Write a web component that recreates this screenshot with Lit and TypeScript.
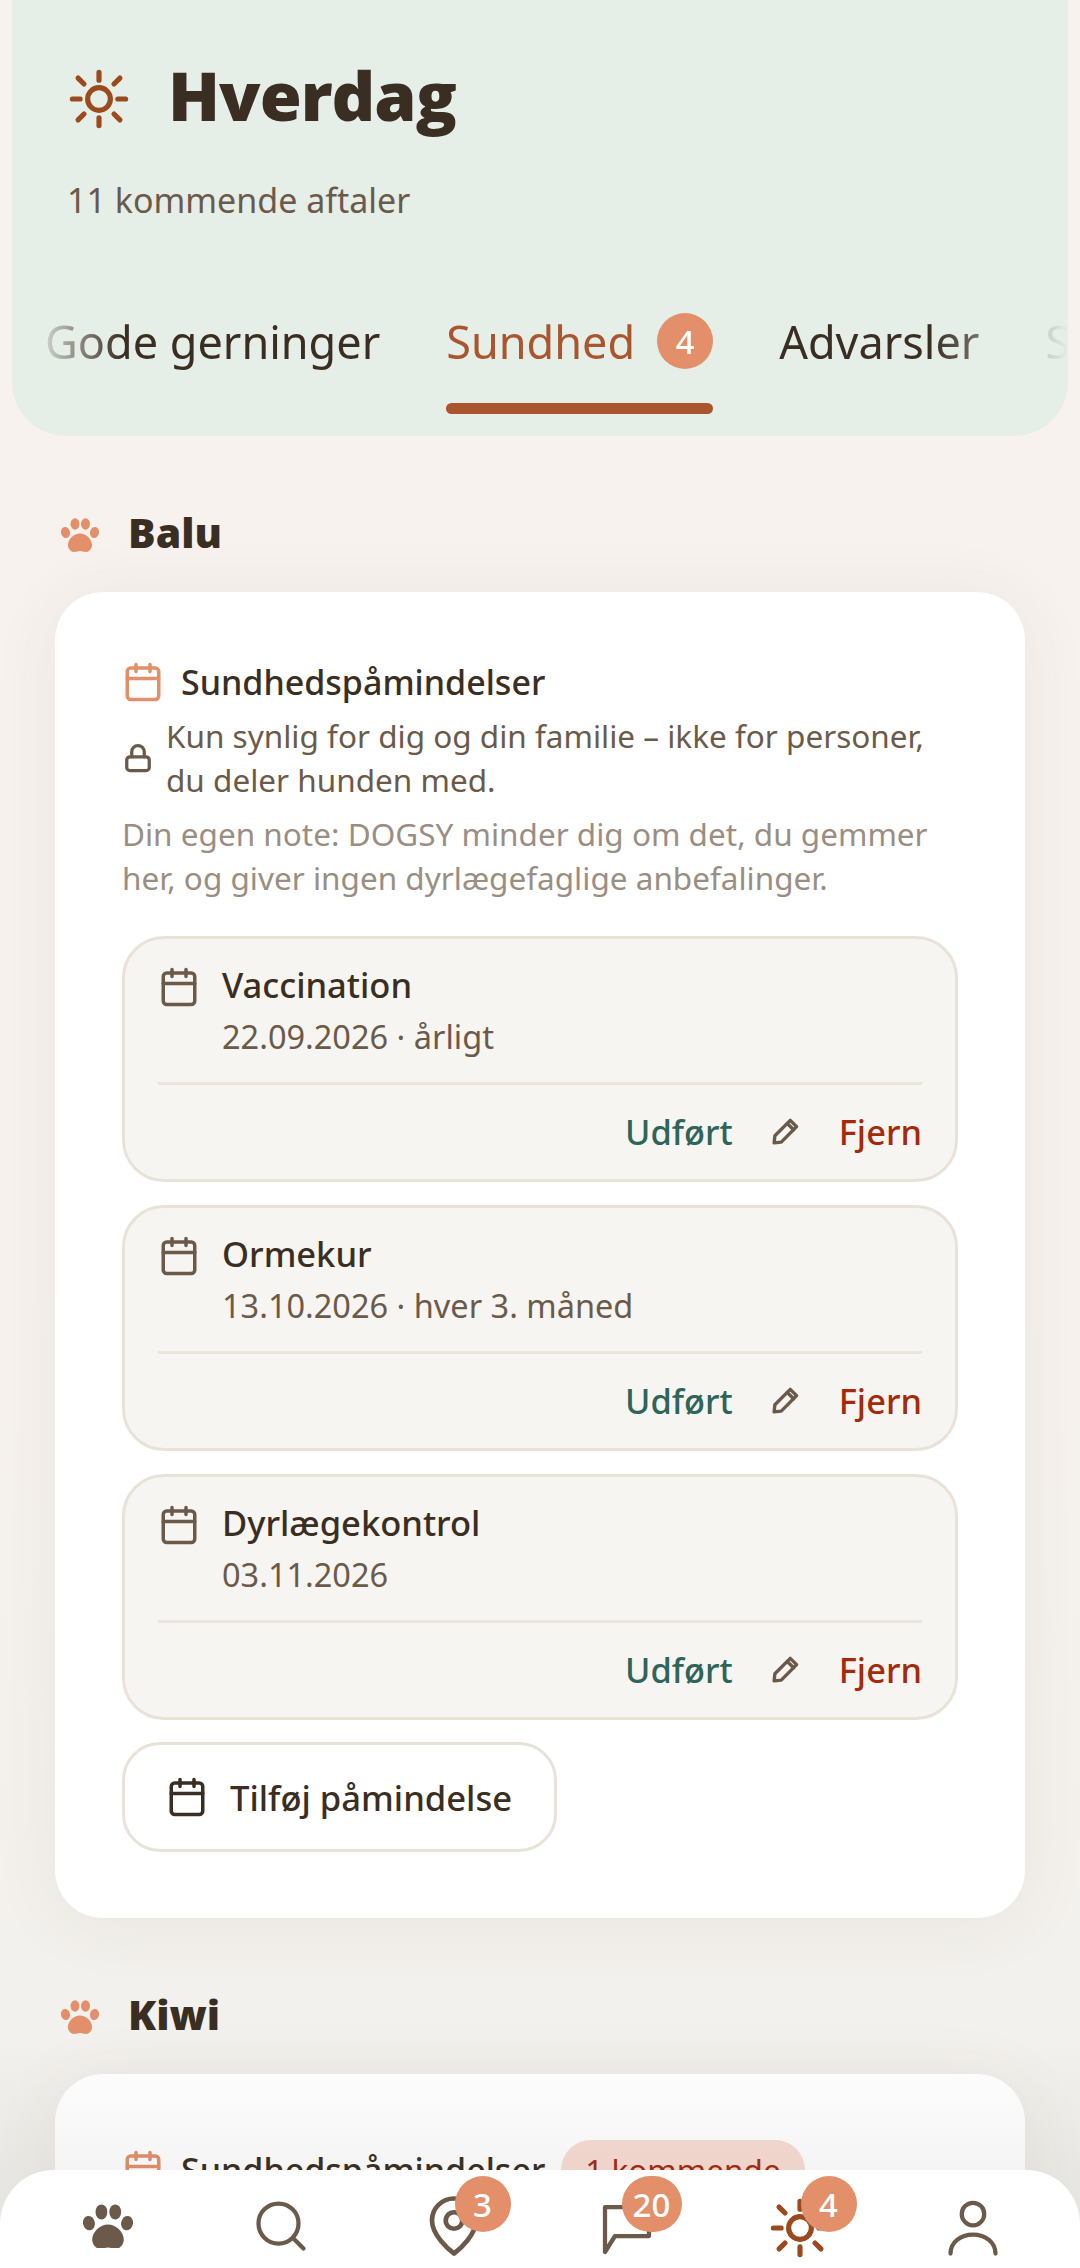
import { LitElement, html, css, svg } from "lit";
import { customElement } from "lit/decorators.js";

const calendar = svg`<path d="M8 2v4M16 2v4"/><rect x="3" y="4" width="18" height="18" rx="2"/><path d="M3 10h18"/>`;
const sun = svg`<circle cx="12" cy="12" r="4.400"/><path d="M12 1.700v3M12 19.300v3M3.900 3.900l2.300 2.300M17.800 17.800l2.300 2.300M1.700 12h3M19.300 12h3M3.900 20.100l2.300-2.300M17.800 6.200l2.300-2.300"/>`;
const paw = svg`<ellipse cx="4.500" cy="14.500" rx="4.500" ry="5.500" transform="rotate(-12 4.500 14.500)"/><ellipse cx="14" cy="6" rx="4.500" ry="5.700"/><ellipse cx="24.500" cy="6" rx="4.500" ry="5.700"/><ellipse cx="33.500" cy="14.500" rx="4.500" ry="5.500" transform="rotate(12 33.500 14.500)"/><path d="M19 15.500c-6 0-12 5.500-12 11.500 0 4 3 7 6 7 2.500 0 4-1 6-1s3.500 1 6 1c3 0 6-3 6-7 0-6-6-11.500-12-11.500z"/>`;
const pencil = svg`<path d="M2.500 21.500l.600-5.700L15.400 3.500l5.100 5L8.200 20.900Z"/><path d="M13 6l5.100 5"/>`;

const reminders = [
  { title: "Vaccination", date: "22.09.2026 · årligt" },
  { title: "Ormekur", date: "13.10.2026 · hver 3. måned" },
  { title: "Dyrlægekontrol", date: "03.11.2026" },
];

@customElement("app-root")
export class AppRoot extends LitElement {
  static styles = css`
    :host {
      display: block;
      position: relative;
      height: 2268px;
      overflow: hidden;
      background: linear-gradient(#f7f2ee 0, #f7f2ee 1300px, #f3f1ed 2000px);
      font-family: "Noto Sans", "Open Sans", sans-serif;
      color: #3a2e22;
    }
    svg.line {
      fill: none;
      stroke: currentColor;
      stroke-linecap: round;
      stroke-linejoin: round;
      stroke-width: 2;
      flex: none;
    }
    svg.solid {
      fill: currentColor;
      flex: none;
    }
    .hero {
      margin: 0 12px;
      height: 436px;
      box-sizing: border-box;
      padding-top: 57px;
      background: #e6eee8;
      border-radius: 0 0 54px 54px;
      overflow: hidden;
    }
    .hero-title {
      display: flex;
      align-items: center;
      gap: 38px;
      padding-left: 56px;
      height: 84px;
    }
    .hero-title svg {
      color: #9a4a1c;
    }
    h1 {
      margin: 0 0 8px;
      font-family: "Open Sans", sans-serif;
      font-size: 68px;
      font-weight: 800;
      letter-spacing: -1px;
      line-height: 84px;
    }
    .sub {
      margin: 37px 0 0 55px;
      font-size: 34px;
      line-height: 44px;
      color: #6b5a4a;
    }
    .tabs {
      display: flex;
      gap: 66px;
      margin-top: 77px;
      padding: 0 0 40px 33px;
      font-size: 45px;
      white-space: nowrap;
      -webkit-mask-image: linear-gradient(90deg, transparent 20px, #000 110px, #000 920px, transparent 1056px);
      mask-image: linear-gradient(90deg, transparent 20px, #000 110px, #000 920px, transparent 1056px);
    }
    .tab {
      flex: none;
      display: flex;
      align-items: center;
      gap: 22px;
      height: 84px;
      position: relative;
    }
    .tab.on {
      color: #a9562e;
    }
    .tab.on::after {
      content: "";
      position: absolute;
      left: 0;
      right: 0;
      bottom: -31px;
      height: 11px;
      border-radius: 6px;
      background: #a9562e;
    }
    .count {
      flex: none;
      min-width: 56px;
      height: 56px;
      box-sizing: border-box;
      padding: 0 8px;
      border-radius: 28px;
      display: flex;
      align-items: center;
      justify-content: center;
      background: #e28f6a;
      color: #fff;
      font-size: 33px;
      font-weight: 500;
    }
    .dog {
      display: flex;
      align-items: center;
      gap: 29px;
      height: 60px;
      padding-left: 61px;
      margin-top: 66px;
    }
    .dog svg {
      margin-top: 6px;
      color: #e28f6a;
    }
    .dog h2 {
      margin: 0;
      font-family: "Open Sans", sans-serif;
      font-size: 41px;
      font-weight: 800;
    }
    .card {
      margin: 30px 55px 0;
      padding: 66px 67px;
      border-radius: 48px;
      background: #fff;
      box-shadow: 0 6px 70px rgba(80, 70, 55, 0.07);
    }
    .card-head {
      display: flex;
      align-items: center;
      gap: 17px;
      min-height: 48px;
      font-size: 34px;
      font-weight: 500;
      line-height: 48px;
    }
    .card-head svg {
      color: #e28f6a;
    }
    .pill {
      margin-left: -1px;
      padding: 0 24px;
      height: 60px;
      border-radius: 30px;
      display: flex;
      align-items: center;
      background: #f7dcd3;
      color: #a52a0c;
      font-size: 31.500px;
      font-weight: 400;
    }
    .lock {
      display: flex;
      align-items: center;
      gap: 13px;
      margin: 8px 0 0 1px;
      font-size: 31.500px;
      line-height: 44px;
      color: #6b5a4a;
    }
    .lock svg {
      stroke-width: 2.600;
    }
    .note {
      margin: 10px 0 36px;
      font-size: 31.500px;
      line-height: 44px;
      color: #9a8e82;
    }
    .item {
      margin-top: 23px;
      height: 246px;
      box-sizing: border-box;
      padding: 24px 33px 0;
      background: #f7f5f1;
      border: 3px solid #e8e2d8;
      border-radius: 42px;
    }
    .item-top {
      display: flex;
      gap: 22px;
      height: 119px;
      border-bottom: 3px solid #ebe6dd;
    }
    .item-top svg {
      margin-top: 3px;
      color: #6b5a4a;
    }
    .item-title {
      font-size: 34.500px;
      font-weight: 500;
      line-height: 44px;
    }
    .item-date {
      margin-top: 8px;
      font-size: 32.500px;
      line-height: 44px;
      color: #6b5a4a;
    }
    .actions {
      display: flex;
      justify-content: flex-end;
      align-items: center;
      gap: 38px;
      height: 92px;
      font-size: 34.400px;
      font-weight: 500;
    }
    .done {
      color: #2f6458;
    }
    .remove {
      color: #a52a0c;
    }
    .actions svg {
      color: #6b5a4a;
      stroke-width: 2.700;
    }
    .add {
      display: flex;
      width: fit-content;
      align-items: center;
      gap: 22px;
      margin-top: 22px;
      height: 110px;
      box-sizing: border-box;
      padding: 0 42px 0 41px;
      background: #fff;
      border: 3px solid #e8e2d8;
      border-radius: 38px;
      font-size: 34.600px;
      font-weight: 500;
    }
    .fade {
      position: absolute;
      left: 0;
      right: 0;
      top: 2040px;
      height: 228px;
      background: linear-gradient(rgba(60, 55, 50, 0), rgba(60, 55, 50, 0.09));
      pointer-events: none;
    }
    nav {
      position: absolute;
      left: 0;
      right: 0;
      bottom: 0;
      height: 98px;
      box-sizing: border-box;
      padding: 26px 21px 0;
      background: #fff;
      border-radius: 54px 54px 0 0;
      display: grid;
      grid-template-columns: repeat(6, 1fr);
      align-items: start;
      color: #6b5a4a;
    }
    nav svg.line {
      stroke-width: 1.700;
    }
    .slot {
      position: relative;
      display: flex;
      justify-content: center;
      align-items: center;
      height: 60px;
    }
    .slot.on {
      color: #9a4a1c;
    }
    .slot.on svg {
      margin-top: 4px;
      stroke-width: 2;
    }
    .slot .count {
      position: absolute;
      top: -20px;
      left: 50%;
      margin-left: 1px;
    }
    .slot .count.wide {
      min-width: 60px;
      margin-left: -5px;
    }
  `;

  private icon(body: unknown, size: number) {
    return html`<svg class="line" width=${size} height=${size} viewBox="0 0 24 24">${body}</svg>`;
  }

  private pawIcon(width: number) {
    return html`<svg class="solid" width=${width} height=${(width * 34) / 38} viewBox="0 0 38 34">${paw}</svg>`;
  }

  private dog(name: string) {
    return html`<div class="dog">${this.pawIcon(38)}<h2>${name}</h2></div>`;
  }

  render() {
    return html`
      <header class="hero">
        <div class="hero-title">${this.icon(sun, 62)}<h1>Hverdag</h1></div>
        <p class="sub">11 kommende aftaler</p>
        <div class="tabs">
          <div class="tab">Gode gerninger</div>
          <div class="tab on">Sundhed <span class="count">4</span></div>
          <div class="tab">Advarsler</div>
          <div class="tab">Sikkerhed</div>
        </div>
      </header>

      ${this.dog("Balu")}
      <section class="card">
        <div class="card-head">${this.icon(calendar, 42)}Sundhedspåmindelser</div>
        <div class="lock">
          <svg class="line" width="30" height="30" viewBox="0 0 24 24">
            <rect x="3" y="11" width="18" height="11" rx="2.500"/><path d="M7 11V7a5 5 0 0 1 10 0v4"/>
          </svg>
          <span>Kun synlig for dig og din familie – ikke for personer, du deler hunden med.</span>
        </div>
        <p class="note">Din egen note: DOGSY minder dig om det, du gemmer her, og giver ingen dyrlægefaglige anbefalinger.</p>
        ${reminders.map(
          (r) => html`
            <div class="item">
              <div class="item-top">
                ${this.icon(calendar, 42)}
                <div>
                  <div class="item-title">${r.title}</div>
                  <div class="item-date">${r.date}</div>
                </div>
              </div>
              <div class="actions">
                <span class="done">Udført</span>
                ${this.icon(pencil, 30)}
                <span class="remove">Fjern</span>
              </div>
            </div>
          `
        )}
        <div class="add">${this.icon(calendar, 42)}Tilføj påmindelse</div>
      </section>

      ${this.dog("Kiwi")}
      <section class="card">
        <div class="card-head">${this.icon(calendar, 42)}Sundhedspåmindelser<span class="pill">1 kommende</span></div>
      </section>

      <div class="fade"></div>
      <nav>
        <div class="slot">${this.pawIcon(50)}</div>
        <div class="slot">${this.icon(svg`<circle cx="11" cy="11" r="8"/><path d="m21 21-4.300-4.300"/>`, 60)}</div>
        <div class="slot">
          ${this.icon(svg`<path d="M20 10c0 5-5.500 10.200-8 12-2.500-1.800-8-7-8-12a8 8 0 0 1 16 0Z"/><circle cx="12" cy="10" r="3"/>`, 66)}
          <span class="count">3</span>
        </div>
        <div class="slot">
          ${this.icon(svg`<path d="M3.200 4.400H20.800V16H7.200L3.200 22.400Z"/>`, 60)}
          <span class="count wide">20</span>
        </div>
        <div class="slot on">${this.icon(sun, 62)}<span class="count">4</span></div>
        <div class="slot">
          ${this.icon(svg`<circle cx="12" cy="7.200" r="4.500"/><path d="M3 23c0-4.500 4-7.600 9-7.600s9 3.100 9 7.600"/>`, 60)}
        </div>
      </nav>
    `;
  }
}
